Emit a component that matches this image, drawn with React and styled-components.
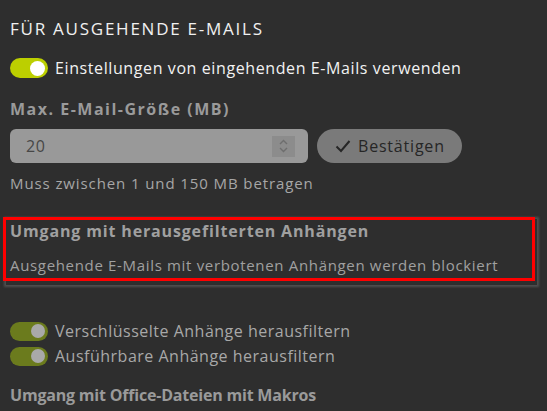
import React, { useState } from "react";
import styled, { createGlobalStyle } from "styled-components";

const GlobalStyle = createGlobalStyle`
  html, body {
    margin: 0;
    padding: 0;
    background: #2e2e2e;
  }
  body {
    font-family: "Open Sans", "Noto Sans", sans-serif;
  }
`;

const Page = styled.div`
  display: flex;
  flex-flow: column nowrap;
  padding: 17px 10px 0 10px;
  height: 411px;
  box-sizing: border-box;
  overflow: hidden;
`;

const Heading = styled.h2`
  margin: 0;
  font-size: 17px;
  font-weight: 400;
  color: #f0f0f0;
  letter-spacing: 1.75px;
  line-height: 24px;
`;

const ToggleRow = styled.label`
  display: flex;
  align-items: center;
  gap: 7px;
  margin-top: ${p => p.$top || 0}px;
  color: ${p => (p.$dim ? "#a8a8a8" : "#f2f2f2")};
  font-size: 16px;
  letter-spacing: ${p => (p.$dim ? 0.5 : 0.6)}px;
  line-height: 22px;
`;

const Track = styled.span`
  display: inline-flex;
  align-items: center;
  justify-content: flex-end;
  width: 38px;
  height: ${p => (p.$dim ? 19 : 20)}px;
  border-radius: 10px;
  padding: 0 3px;
  box-sizing: border-box;
  background: ${p => (p.$dim ? "#6b7b1d" : "#bccf00")};
  flex-shrink: 0;
`;

const Knob = styled.span`
  width: ${p => (p.$dim ? 14 : 15)}px;
  height: ${p => (p.$dim ? 14 : 15)}px;
  border-radius: 50%;
  background: ${p => (p.$dim ? "#a9a9a9" : "#ffffff")};
`;

const FieldLabel = styled.div`
  margin-top: ${p => p.$top || 0}px;
  font-size: 16px;
  font-weight: 700;
  color: ${p => p.$color || "#9a9a9a"};
  letter-spacing: ${p => p.$spacing || 0}px;
  line-height: 22px;
`;

const InputRow = styled.div`
  display: flex;
  align-items: center;
  gap: 9px;
  margin-top: 9px;
`;

const NumberBox = styled.div`
  display: flex;
  align-items: center;
  justify-content: space-between;
  width: 298px;
  height: 34px;
  box-sizing: border-box;
  padding: 0 13px 0 16px;
  border-radius: 6px;
  background: #999999;
  color: #474747;
  font-size: 16px;
  letter-spacing: 0.5px;
`;

const Spinner = styled.span`
  display: flex;
  align-items: center;
  justify-content: center;
  width: 23px;
  height: 21px;
  background: #8c8c8c;
`;

const ConfirmButton = styled.button`
  display: flex;
  align-items: center;
  gap: 7px;
  height: 34px;
  padding: 0 17px 0 18px;
  border: none;
  border-radius: 17px;
  background: #7a7a7a;
  color: #262626;
  font-family: inherit;
  font-size: 16px;
  letter-spacing: 0.8px;
  cursor: pointer;
`;

const Hint = styled.div`
  margin-top: ${p => p.$top || 10}px;
  color: ${p => p.$color || "#a6a6a6"};
  font-size: 15px;
  letter-spacing: ${p => p.$spacing || 0.9}px;
  line-height: 20px;
`;

const Card = styled.div`
  position: relative;
  margin: 26px 0 0 -4px;
  width: 531px;
  box-sizing: border-box;
  padding: 1px 4px 10px 4px;
  box-shadow: 0 0 2px 2px #4f4f4f;
  &::after {
    content: "";
    position: absolute;
    left: -3px;
    top: -2px;
    right: 2px;
    bottom: 4px;
    border: 3px solid #ff0000;
    pointer-events: none;
  }
`;

const Switch = ({ dim, children, top }) => {
  const [on, setOn] = useState(true);
  return (
    <ToggleRow $dim={dim} $top={top} onClick={() => setOn(!on)}>
      <Track $dim={dim}>
        <Knob $dim={dim} />
      </Track>
      {children}
    </ToggleRow>
  );
};

const App = () => {
  return (
    <Page>
      <GlobalStyle />
      <Heading>FÜR AUSGEHENDE E-MAILS</Heading>
      <Switch top={16}>Einstellungen von eingehenden E-Mails verwenden</Switch>
      <FieldLabel $top={19} $spacing={1.5}>Max. E-Mail-Größe (MB)</FieldLabel>
      <InputRow>
        <NumberBox>
          <span>20</span>
          <Spinner>
            <svg width="11" height="16" viewBox="0 0 11 16" fill="none" stroke="#6e6e6e" strokeWidth="1.4">
              <path d="M2 6 L5.5 2.5 L9 6" />
              <path d="M2 10 L5.5 13.5 L9 10" />
            </svg>
          </Spinner>
        </NumberBox>
        <ConfirmButton>
          <svg width="16" height="14" viewBox="0 0 16 14" fill="none" stroke="#262626" strokeWidth="2">
            <path d="M1.5 7.5 L6 12 L14.5 2" />
          </svg>
          Bestätigen
        </ConfirmButton>
      </InputRow>
      <Hint>Muss zwischen 1 und 150 MB betragen</Hint>
      <Card>
        <FieldLabel $color="#a0a0a0" $spacing={0.85}>
          Umgang mit herausgefilterten Anhängen
        </FieldLabel>
        <Hint $top={13} $color="#a0a0a0" $spacing={0.67}>
          Ausgehende E-Mails mit verbotenen Anhängen werden blockiert
        </Hint>
      </Card>
      <Switch dim top={35}>Verschlüsselte Anhänge herausfiltern</Switch>
      <Switch dim top={3}>Ausführbare Anhänge herausfiltern</Switch>
      <FieldLabel $top={17} $spacing={-0.2}>Umgang mit Office-Dateien mit Makros</FieldLabel>
    </Page>
  );
};

export default App;
